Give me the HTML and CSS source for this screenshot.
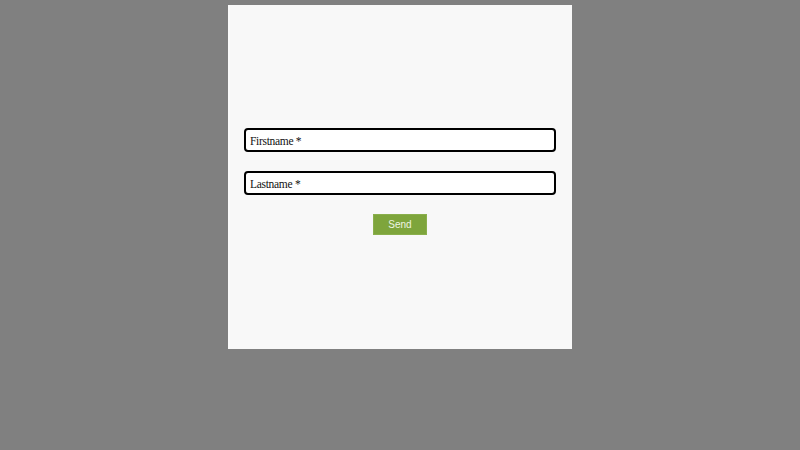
FILE: index.html
```html
<!DOCTYPE html>
<html lang="en">
<head>
<meta charset="utf-8">
<title>Contact</title>
<link rel="stylesheet" href="styles.css">
</head>
<body>
<main class="page">
  <form class="card">
    <input class="field" type="text" placeholder="Firstname *">
    <input class="field" type="text" placeholder="Lastname *">
    <button class="send" type="button">Send</button>
  </form>
</main>
</body>
</html>
```

FILE: styles.css
```css
html, body {
  margin: 0;
  padding: 0;
  height: 100%;
  background: #808080;
}

.page {
  display: flex;
  justify-content: center;
  padding-top: 5px;
}

.card {
  box-sizing: border-box;
  width: 344px;
  height: 344px;
  background: #f8f8f8;
  border-left: 2px solid #fbfbfb;
  padding: 123px 16px 0 14px;
  margin: 0;
  display: flex;
  flex-direction: column;
  align-items: center;
  gap: 19px;
}

.field {
  box-sizing: border-box;
  width: 100%;
  height: 24px;
  margin: 0;
  padding: 2px 4px 0;
  border: 2px solid #000;
  border-radius: 4px;
  background: #fff;
  font-family: "Liberation Serif", "Times New Roman", serif;
  font-size: 11.5px;
  letter-spacing: -0.3px;
  color: #000;
  outline: none;
}

.field::placeholder {
  color: #111;
  opacity: 1;
}

.send {
  box-sizing: border-box;
  width: 54px;
  height: 21px;
  margin: 0;
  padding: 0;
  border: 1px solid #8aaf4c;
  background: #7ea53c;
  color: #eef4e2;
  font-family: "Liberation Sans", Arial, sans-serif;
  font-size: 10px;
  cursor: pointer;
}
```
